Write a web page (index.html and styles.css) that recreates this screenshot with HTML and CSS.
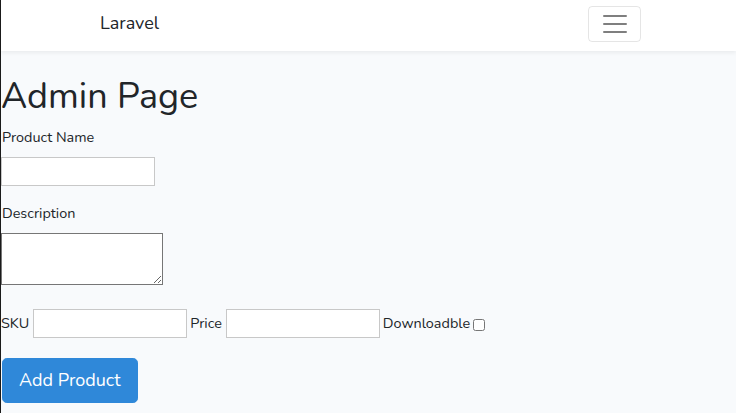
FILE: index.html
```html
<!DOCTYPE html>
<html lang="en">
<head>
<meta charset="utf-8">
<title>Laravel</title>
<link rel="stylesheet" href="styles.css">
</head>
<body>
<div class="app">
  <nav class="navbar">
    <div class="nav-inner">
      <a class="brand" href="#">Laravel</a>
      <button class="toggler" type="button" aria-label="Toggle navigation">
        <svg width="30" height="30" viewBox="0 0 30 30"><path d="M4 7h22M4 15h22M4 23h22" stroke="rgba(0,0,0,0.5)" stroke-width="2" stroke-linecap="round" fill="none"/></svg>
      </button>
    </div>
  </nav>
  <main class="main">
    <h1 class="title">Admin Page</h1>
    <form class="form">
      <div class="field">
        <label class="label">Product Name</label>
        <input class="input" type="text">
      </div>
      <div class="field">
        <label class="label">Description</label>
        <textarea class="textarea"></textarea>
      </div>
      <div class="row">
        <label class="inline-label">SKU</label>
        <input class="input" type="text">
        <label class="inline-label">Price</label>
        <input class="input" type="text">
        <label class="inline-label">Downloadble</label>
        <input class="check" type="checkbox">
      </div>
      <button class="btn" type="button">Add Product</button>
    </form>
  </main>
</div>
</body>
</html>
```
FILE: styles.css
```css
html, body {
  margin: 0;
  padding: 0;
}
body {
  background: #f8fafc;
  font-family: "Nunito", "Lato", "Noto Sans", sans-serif;
  font-size: 14.4px;
  line-height: 1.6;
  color: #212529;
  border-left: 1px solid #1a1a1a;
  min-height: 413px;
  box-sizing: border-box;
}
.navbar {
  background: #fff;
  height: 51px;
  box-shadow: 0 2px 4px rgba(0,0,0,0.06);
  position: relative;
}
.nav-inner {
  display: flex;
  align-items: center;
  justify-content: space-between;
  padding: 6px 95px 0 99px;
  height: 45px;
  box-sizing: content-box;
}
.brand {
  font-size: 18px;
  color: #212529;
  text-decoration: none;
  padding-bottom: 10px;
}
.toggler {
  width: 53px;
  height: 36px;
  border: 1px solid rgba(0,0,0,0.1);
  border-radius: 4px;
  background: transparent;
  display: flex;
  align-items: center;
  justify-content: center;
  padding: 0;
  margin-bottom: 9px;
}
.toggler svg { display: block; }
.title {
  font-size: 36px;
  font-weight: 400;
  line-height: 1.2;
  margin: 24px 0 8px 0;
}
.form {
  display: flex;
  flex-direction: column;
  align-items: flex-start;
}
.field {
  display: flex;
  flex-direction: column;
  align-items: flex-start;
  margin-bottom: 16px;
}
.label {
  margin: 0 0 8px 1px;
  line-height: 23px;
}
.input {
  width: 154px;
  height: 29px;
  box-sizing: border-box;
  border: 1px solid #c8c8c8;
  background: #fff;
  margin: 0;
  padding: 0 4px;
  font: inherit;
}
.textarea {
  width: 162px;
  height: 52px;
  box-sizing: border-box;
  border: 1px solid #767676;
  background: #fff;
  margin: 0;
  padding: 2px;
  font: inherit;
}
.row {
  display: flex;
  align-items: center;
  margin-top: 8px;
  gap: 4px;
}
.row .inline-label:nth-child(3) { margin-left: -1px; }
.row .inline-label:nth-child(5) { margin-left: -1px; margin-right: -1px; }
.check {
  width: 12px;
  height: 12px;
  margin: 2px 0 0 0;
}
.btn {
  margin: 20px 0 0 1px;
  background: #2f88d9;
  color: #fff;
  border: 1px solid #2f88d9;
  border-radius: 4.8px;
  font: inherit;
  font-size: 18px;
  line-height: 1.5;
  padding: 8px 17px 8px 16px;
  height: 45px;
  white-space: nowrap;
}
```
